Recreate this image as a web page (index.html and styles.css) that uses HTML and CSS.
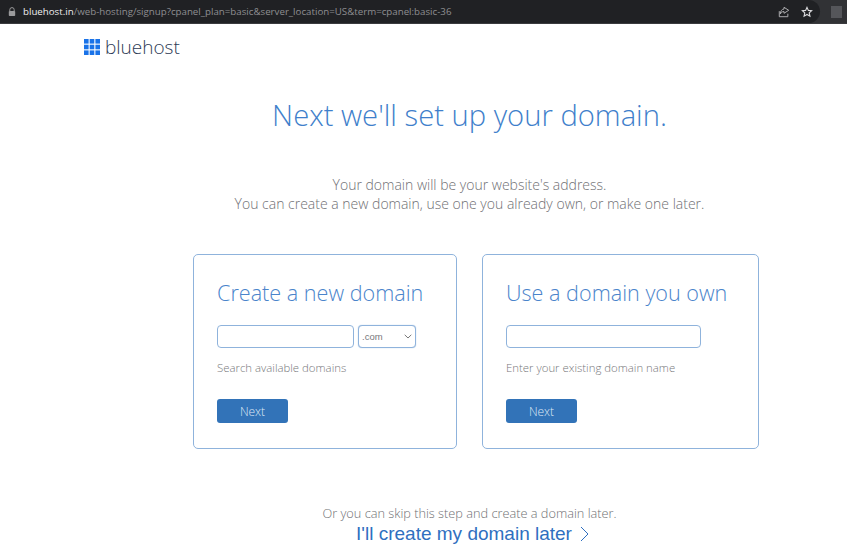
FILE: index.html
```html
<!DOCTYPE html>
<html lang="en">
<head>
<meta charset="utf-8">
<title>Bluehost signup</title>
<link rel="stylesheet" href="styles.css">
</head>
<body>
<header class="chrome">
  <div class="omnibox">
    <svg class="lock" viewBox="0 0 8 10" width="8" height="10"><path d="M1.8 4V2.8a2.2 2.2 0 0 1 4.4 0V4" fill="none" stroke="#9a9a9c" stroke-width="1"/><rect x="0.8" y="4" width="6.4" height="5" rx="0.8" fill="#9a9a9c"/></svg>
    <div class="url"><span class="host">bluehost.in</span>/web-hosting/signup?cpanel_plan=basic&amp;server_location=US&amp;term=cpanel:basic-36</div>
    <svg class="tool" viewBox="0 0 14 14" width="12" height="12"><path d="M7 1.5 12.5 5 7 8.5V6.5C4.5 6.5 3.5 7.5 2.8 9.2 2.8 6 4.5 3.7 7 3.5Z M1.5 6v6.5h10V9" fill="none" stroke="#b4b4b6" stroke-width="1.1"/></svg>
    <svg class="tool" viewBox="0 0 14 14" width="12" height="12"><path d="M7 1.6 8.6 5.1 12.4 5.5 9.6 8 10.4 11.8 7 9.9 3.6 11.8 4.4 8 1.6 5.5 5.4 5.1Z" fill="none" stroke="#dcdcde" stroke-width="1.3"/></svg>
  </div>
  <div class="ext"><div class="ext-icon"></div></div>
</header>
<div class="logo">
  <svg viewBox="0 0 16 16" width="16" height="16"><g fill="#1a73e8"><rect x="0" y="0" width="4.6" height="4.6"/><rect x="5.7" y="0" width="4.6" height="4.6"/><rect x="11.4" y="0" width="4.6" height="4.6"/><rect x="0" y="5.7" width="4.6" height="4.6"/><rect x="5.7" y="5.7" width="4.6" height="4.6"/><rect x="11.4" y="5.7" width="4.6" height="4.6"/><rect x="0" y="11.4" width="4.6" height="4.6"/><rect x="5.7" y="11.4" width="4.6" height="4.6"/><rect x="11.4" y="11.4" width="4.6" height="4.6"/></g></svg>
  <span class="logo-text">bluehost</span>
</div>
<main class="main">
  <h1 class="title">Next we'll set up your domain.</h1>
  <p class="intro">Your domain will be your website's address.<br>You can create a new domain, use one you already own, or make one later.</p>
  <div class="cards">
    <section class="card card-new">
      <h2 class="card-title">Create a new domain</h2>
      <div class="fields">
        <div class="input input-new"></div>
        <div class="select"><span>.com</span>
          <svg viewBox="0 0 8 5" width="8" height="5"><path d="M.7.8 4 4 7.3.8" fill="none" stroke="#777" stroke-width="1"/></svg>
        </div>
      </div>
      <p class="hint">Search available domains</p>
      <button class="next" type="button">Next</button>
    </section>
    <section class="card card-own">
      <h2 class="card-title">Use a domain you own</h2>
      <div class="fields">
        <div class="input input-own"></div>
      </div>
      <p class="hint">Enter your existing domain name</p>
      <button class="next" type="button">Next</button>
    </section>
  </div>
  <p class="skip">Or you can skip this step and create a domain later.</p>
  <a class="later" href="#">I'll create my domain later
    <svg viewBox="0 0 9 16" width="9" height="16"><path d="M1 1 8 8 1 15" fill="none" stroke="#2f6fc0" stroke-width="1"/></svg>
  </a>
</main>
</body>
</html>
```
FILE: styles.css
```css
* { box-sizing: border-box; }
html, body { margin: 0; padding: 0; }
body {
  width: 847px;
  height: 559px;
  overflow: hidden;
  background: #fff;
  font-family: "Open Sans", "Liberation Sans", sans-serif;
}
.chrome {
  display: flex;
  height: 24px;
  background: #313235;
  border-bottom: 1px solid #3a3b3e;
}
.omnibox {
  flex: 1;
  display: flex;
  align-items: center;
  background: #202124;
  border-radius: 0 12px 12px 0;
  padding: 0 7px 0 8px;
}
.lock { margin-right: 7px; }
.url {
  flex: 1;
  font-size: 9.72px;
  color: #8e8e91;
  white-space: nowrap;
}
.host { color: #eeeeee; }
.tool { margin-left: 11px; }
.ext {
  width: 27px;
  display: flex;
  align-items: center;
  padding-left: 11px;
}
.ext-icon {
  width: 11px;
  height: 12px;
  background: #55565a;
}
.logo {
  display: flex;
  align-items: center;
  gap: 5px;
  height: 16px;
  margin: 15px 0 0 84px;
}
.logo-text {
  font-size: 19px;
  font-weight: 300;
  color: #2d3a55;
  line-height: 16px;
}
.main {
  padding-left: 92px;
  display: flex;
  flex-direction: column;
  align-items: center;
}
.title {
  margin: 36px 0 0;
  font-size: 29.2px;
  line-height: 48px;
  font-weight: 300;
  color: #3f7fcb;
  white-space: nowrap;
}
.intro {
  margin: 36px 0 0;
  font-size: 14px;
  line-height: 19px;
  font-weight: 300;
  color: #6f7074;
  text-align: center;
}
.cards {
  display: flex;
  gap: 25px;
  margin: 41px 0 0 13px;
}
.card {
  height: 195px;
  border: 1px solid #8fb3dc;
  border-radius: 5px;
  padding: 23px;
}
.card-new { width: 264px; }
.card-own { width: 277px; }
.card-title {
  margin: 0;
  font-size: 21.6px;
  line-height: 30px;
  font-weight: 300;
  color: #4a84cb;
  white-space: nowrap;
}
.fields {
  display: flex;
  gap: 4px;
  margin-top: 17px;
}
.input, .select {
  height: 23px;
  border: 1px solid #8fb3dc;
  border-radius: 4px;
  background: #fff;
}
.input-new { width: 137px; }
.input-own { width: 195px; }
.select {
  width: 58px;
  display: flex;
  align-items: center;
  justify-content: space-between;
  padding: 0 3px 0 3px;
  font-family: "Liberation Sans", sans-serif;
  font-size: 9.5px;
  color: #77787b;
  box-shadow: 0 0 1px #8fb3dc;
}
.hint {
  margin: 10px 0 0;
  font-size: 11.4px;
  line-height: 20px;
  font-weight: 300;
  color: #77787b;
  white-space: nowrap;
}
.next {
  display: block;
  width: 71px;
  height: 24px;
  margin-top: 21px;
  padding: 0;
  border: 0;
  border-radius: 3px;
  background: #3273b8;
  color: #dfe9f5;
  font-family: inherit;
  font-size: 12px;
  font-weight: 300;
}
.skip {
  margin: 55px 0 0;
  font-size: 12.75px;
  line-height: 18px;
  font-weight: 300;
  color: #6f7074;
}
.later {
  display: flex;
  align-items: center;
  gap: 8px;
  margin-left: 6px;
  font-family: "Liberation Sans", sans-serif;
  font-size: 19px;
  line-height: 24px;
  color: #2f6fc0;
  text-decoration: none;
}
```
